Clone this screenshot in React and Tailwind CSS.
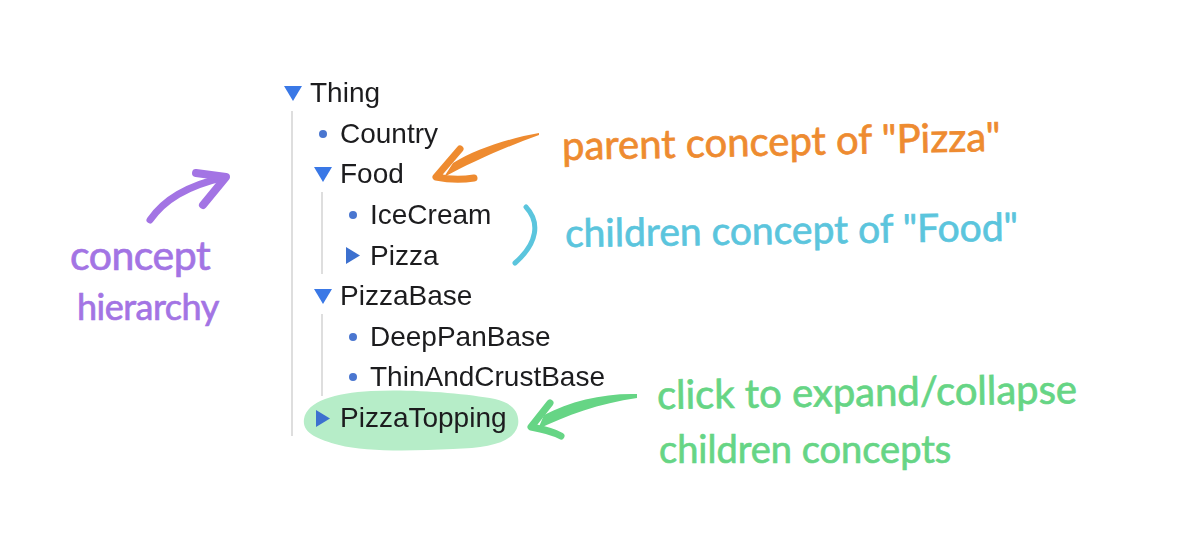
const tree = [
  {
    name: "Thing",
    open: true,
    children: [
      { name: "Country" },
      {
        name: "Food",
        open: true,
        children: [{ name: "IceCream" }, { name: "Pizza", open: false }],
      },
      {
        name: "PizzaBase",
        open: true,
        children: [{ name: "DeepPanBase" }, { name: "ThinAndCrustBase" }],
      },
      { name: "PizzaTopping", open: false, marked: true },
    ],
  },
];

const Toggle = ({ open }) => {
  if (open === undefined) {
    return <span className="ml-[6px] h-[8px] w-[8px] rounded-full bg-[#4a76d0]"></span>;
  }
  if (open) {
    return (
      <svg width="18" height="15" viewBox="0 0 18 15" className="ml-[1px]">
        <path d="M0 0H18L9 15Z" fill="#3a78e6" />
      </svg>
    );
  }
  return (
    <svg width="14" height="17" viewBox="0 0 14 17" className="ml-[3px]">
      <path d="M0 0L14 8.5L0 17Z" fill="#3c70cf" />
    </svg>
  );
};

const TreeNode = ({ node }) => {
  return (
    <div>
      <div className="relative flex h-[40.6px] items-center">
        {node.marked && (
          <svg
            width="220"
            height="66"
            viewBox="0 0 220 66"
            className="absolute left-[-10px] top-[-9px] -z-10"
          >
            <path
              d="M1 30C4 12 32 4 68 2C108 0 160 4 192 10C210 14 217 24 215 36C211 53 188 59 150 60C110 62 62 63 36 56C14 50 -1 44 1 30Z"
              fill="#b6edc8"
            />
          </svg>
        )}
        <span className="flex w-[27px] shrink-0 items-center">
          <Toggle open={node.open} />
        </span>
        <span className="whitespace-nowrap text-[28px] leading-none text-[#1c1c1e] blur-[0.4px]">
          {node.name}
        </span>
      </div>
      {node.children && (
        <div className="relative ml-[8px] pl-[22px] before:absolute before:bottom-[2px] before:left-0 before:top-[-3px] before:w-[2px] before:bg-[#dedede]">
          {node.children.map((child) => (
            <TreeNode key={child.name} node={child} />
          ))}
        </div>
      )}
    </div>
  );
};

const Note = ({ className, children }) => (
  <p
    className={`origin-left whitespace-nowrap font-['Lato',sans-serif] leading-none [-webkit-text-stroke:0.7px_currentColor] ${className}`}
  >
    {children}
  </p>
);

const App = () => {
  return (
    <div className="relative isolate grid h-[556px] w-[1186px] grid-cols-[283px_279px_1fr] overflow-hidden bg-white font-['Liberation_Sans',Arial,sans-serif]">
      <div className="pl-[70px] pt-[234px] text-[#a374e4]">
        <Note className="text-[41px] tracking-[-0.5px]">concept</Note>
        <Note className="ml-[7px] mt-[13px] text-[36px] tracking-[-0.5px]">hierarchy</Note>
      </div>

      <div className="pt-[73px]">
        {tree.map((node) => (
          <TreeNode key={node.name} node={node} />
        ))}
      </div>

      <div className="pt-[125px]">
        <Note className="-rotate-[1.2deg] text-[40px] text-[#ee8b30]">parent concept of "Pizza"</Note>
        <Note className="ml-[3px] mt-[48px] -rotate-[0.8deg] text-[39px] text-[#5bc5dd]">children concept of "Food"</Note>
        <Note className="ml-[95px] mt-[122px] -rotate-[0.8deg] text-[40px] text-[#66d585]">click to expand/collapse</Note>
        <Note className="ml-[97px] mt-[15px] text-[38px] text-[#66d585]">children concepts</Note>
      </div>

      <svg width="1186" height="556" viewBox="0 0 1186 556" className="pointer-events-none absolute left-0 top-0">
        {/* purple arrow */}
        <path d="M150 220C164 200 186 186 225 177" fill="none" stroke="#a374e4" strokeWidth="7" strokeLinecap="round" />
        <path d="M196 173L226 177L203 205" fill="none" stroke="#a374e4" strokeWidth="8" strokeLinecap="round" strokeLinejoin="round" />
        {/* orange arrow */}
        <path d="M539 133C510 138 476 149 453 163L444 177C470 163 505 147 539 135Z" fill="#ee8b30" />
        <path d="M460 149L436 177C450 180 462 180 474 178" fill="none" stroke="#ee8b30" strokeWidth="7" strokeLinecap="round" strokeLinejoin="round" />
        {/* blue bracket */}
        <path d="M526 207C540 222 538 243 515 263" fill="none" stroke="#5bc5dd" strokeWidth="5" strokeLinecap="round" />
        {/* green arrow */}
        <path d="M637 394C605 393 570 401 544 415L538 429C565 416 600 403 637 398Z" fill="#66d585" />
        <path d="M550 403L531 427C542 429 552 431 561 436" fill="none" stroke="#66d585" strokeWidth="7" strokeLinecap="round" strokeLinejoin="round" />
      </svg>
    </div>
  );
};

export default App;
